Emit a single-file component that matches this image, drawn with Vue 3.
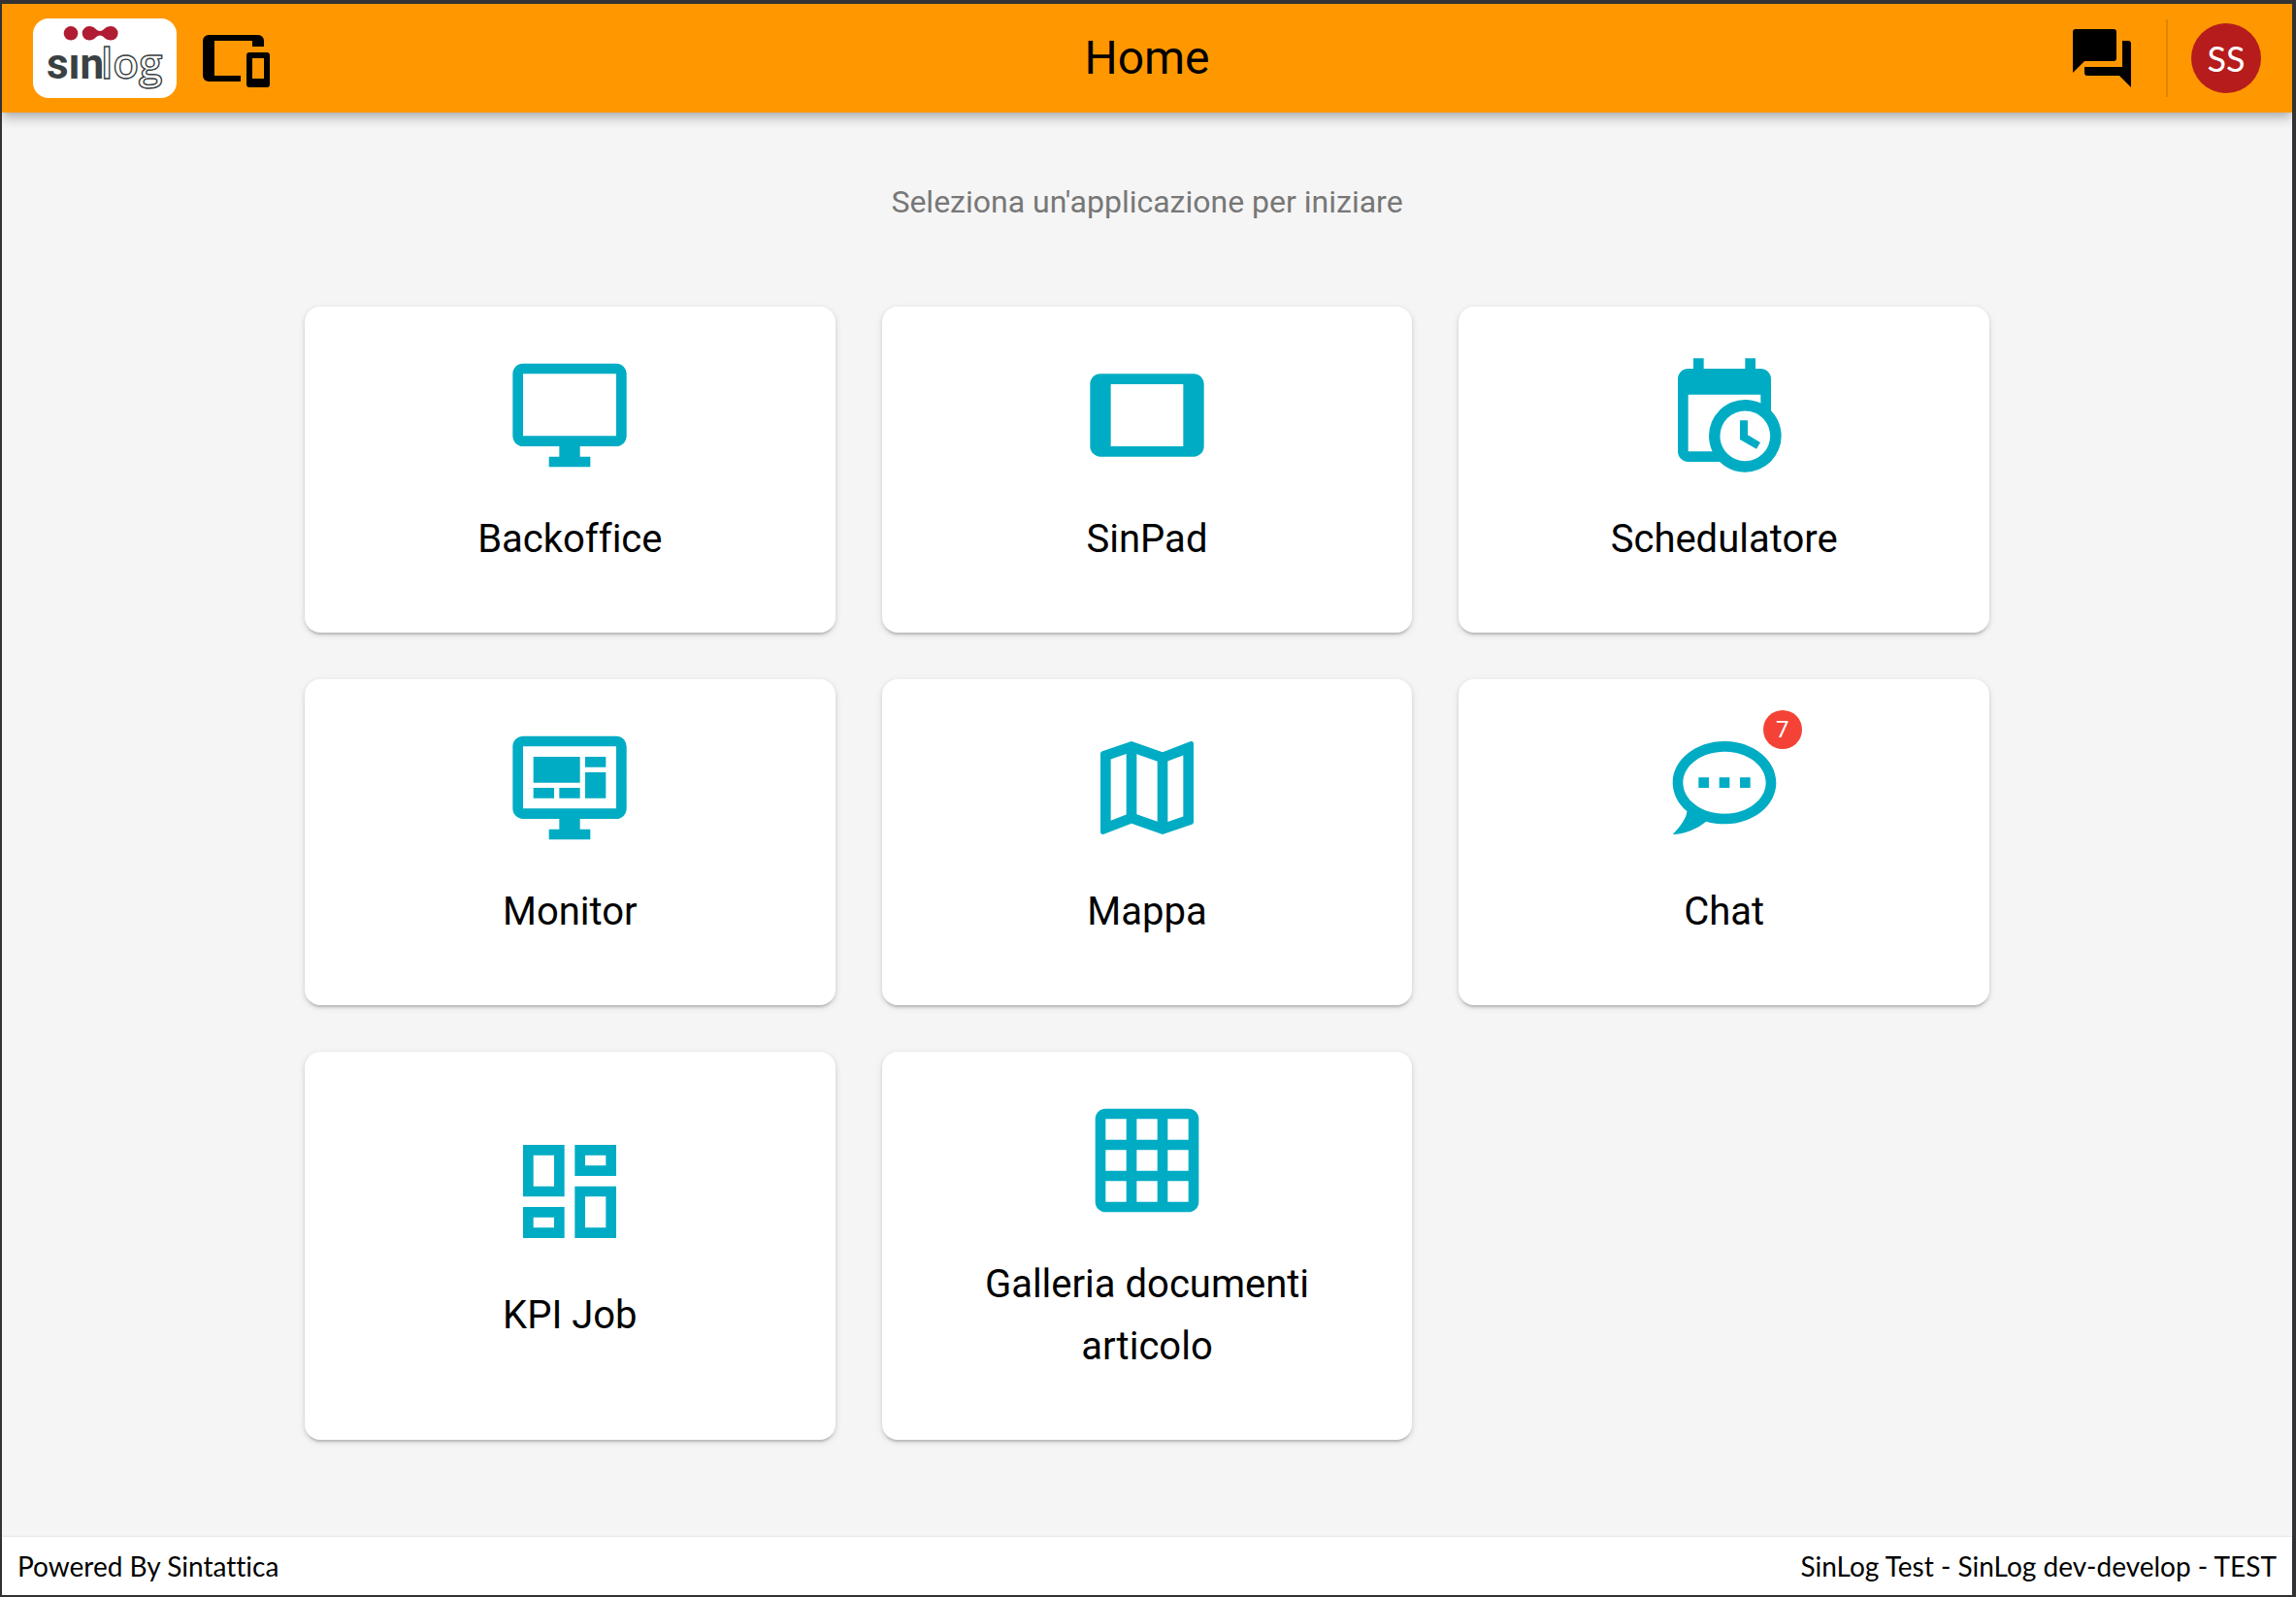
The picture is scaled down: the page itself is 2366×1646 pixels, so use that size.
<script setup>
import { ref } from 'vue';

const title = ref('Home');
const initials = ref('SS');

const apps = [
  {
    name: 'Backoffice',
    icon: 'M21,16H3V4H21M21,2H3C1.89,2 1,2.89 1,4V16A2,2 0 0,0 3,18H10V20H8V22H16V20H14V18H21A2,2 0 0,0 23,16V4C23,2.89 22.1,2 21,2Z',
  },
  {
    name: 'SinPad',
    icon: 'M19,18H5V6H19M21,4H3C1.89,4 1,4.89 1,6V18A2,2 0 0,0 3,20H21A2,2 0 0,0 23,18V6C23,4.89 22.1,4 21,4Z',
  },
  {
    name: 'Schedulatore',
    icon: 'M15,13H16.5V15.82L18.94,17.23L18.19,18.53L15,16.69V13M19,8H5V19H9.67C9.24,18.09 9,17.07 9,16A7,7 0 0,1 16,9C17.07,9 18.09,9.24 19,9.67V8M5,21C3.89,21 3,20.1 3,19V5C3,3.89 3.89,3 5,3H6V1H8V3H16V1H18V3H19A2,2 0 0,1 21,5V11.1C22.24,12.36 23,14.09 23,16A7,7 0 0,1 16,23C14.09,23 12.36,22.24 11.1,21H5M16,11.15A4.85,4.85 0 0,0 11.15,16C11.15,18.68 13.32,20.85 16,20.85A4.85,4.85 0 0,0 20.85,16C20.85,13.32 18.68,11.15 16,11.15Z',
  },
  {
    name: 'Monitor',
    icon: 'M21,16V4H3V16H21M21,2A2,2 0 0,1 23,4V16A2,2 0 0,1 21,18H14V20H16V22H8V20H10V18H3C1.89,18 1,17.1 1,16V4C1,2.89 1.89,2 3,2H21M5,6H14V11H5V6M15,6H19V8H15V6M19,9V14H15V9H19M5,12H9V14H5V12M10,12H14V14H10V12Z',
  },
  {
    name: 'Mappa',
    icon: 'M20.5,3L20.34,3.03L15,5.1L9,3L3.36,4.9C3.15,4.97 3,5.15 3,5.38V20.5A0.5,0.5 0 0,0 3.5,21L3.66,20.97L9,18.9L15,21L20.64,19.1C20.85,19.03 21,18.85 21,18.62V3.5A0.5,0.5 0 0,0 20.5,3M10,5.47L14,6.87V18.53L10,17.13V5.47M5,6.46L8,5.45V17.15L5,18.31V6.46M19,17.54L16,18.55V6.86L19,5.7V17.54Z',
  },
  {
    name: 'Chat',
    badge: 7,
    icon: 'M12 3C6.5 3 2 6.58 2 11C2.05 13.15 3.06 15.17 4.75 16.5C4.75 17.1 4.33 18.67 2 21C4.37 20.89 6.64 20 8.47 18.5C9.61 18.83 10.81 19 12 19C17.5 19 22 15.42 22 11S17.5 3 12 3M12 17C7.58 17 4 14.31 4 11S7.58 5 12 5 20 7.69 20 11 16.42 17 12 17M17 12V10H15V12H17M13 12V10H11V12H13M9 12V10H7V12H9Z',
  },
  {
    name: 'KPI Job',
    icon: 'M19,5V7H15V5H19M9,5V11H5V5H9M19,13V19H15V13H19M9,17V19H5V17H9M21,3H13V9H21V3M11,3H3V13H11V3M21,11H13V21H21V11M11,15H3V21H11V15Z',
  },
  {
    name: 'Galleria documenti articolo',
    icon: 'M4,2H20A2,2 0 0,1 22,4V20A2,2 0 0,1 20,22H4A2,2 0 0,1 2,20V4A2,2 0 0,1 4,2M4,4V8H8V4H4M10,4V8H14V4H10M16,4V8H20V4H16M4,10V14H8V10H4M10,10V14H14V10H10M16,10V14H20V10H16M4,16V20H8V16H4M10,16V20H14V16H10M16,16V20H20V16H16Z',
  },
];
</script>

<template>
  <div class="app">
    <header class="bar">
      <div class="bar-left">
        <a class="logo" href="#" aria-label="sinlog">
          <svg viewBox="0 0 148 82" width="148" height="82">
            <g fill="#b01c33">
              <circle cx="39" cy="15.300" r="7.300" />
              <path
                d="M58,8C64,8 65,13 69,13C73,13 74,8 80.300,8A7.300,7.300 0 0,1 80.300,22.600C74,22.600 73,17.600 69,17.600C65,17.600 64,22.600 58,22.600A7.300,7.300 0 0,1 58,8Z"
              />
            </g>
            <text class="logo-sin" x="14" y="62">sın</text>
            <text class="logo-log" x="70" y="62">log</text>
          </svg>
        </a>
        <button class="icon-btn" type="button" aria-label="Dispositivi">
          <svg viewBox="0 0 24 24">
            <path
              d="M3,4H20A2,2 0 0,1 22,6V8H18V6H5V18H14V20H3A2,2 0 0,1 1,18V6A2,2 0 0,1 3,4M17,10H23A1,1 0 0,1 24,11V21A1,1 0 0,1 23,22H17A1,1 0 0,1 16,21V11A1,1 0 0,1 17,10M18,12V19H22V12H18Z"
            />
          </svg>
        </button>
      </div>
      <h1 class="title">{{ title }}</h1>
      <div class="bar-right">
        <button class="icon-btn" type="button" aria-label="Messaggi">
          <svg viewBox="0 0 24 24">
            <path
              d="M17,12V3A1,1 0 0,0 16,2H3A1,1 0 0,0 2,3V17L6,13H16A1,1 0 0,0 17,12M21,6H19V15H6V17A1,1 0 0,0 7,18H18L22,22V7A1,1 0 0,0 21,6Z"
            />
          </svg>
        </button>
        <span class="divider"></span>
        <button class="avatar" type="button">{{ initials }}</button>
      </div>
    </header>

    <main class="content">
      <p class="hint">Seleziona un'applicazione per iniziare</p>
      <nav class="grid">
        <a v-for="app in apps" :key="app.name" class="card" href="#">
          <span class="card-icon">
            <svg viewBox="0 0 24 24">
              <path :d="app.icon" fill-rule="evenodd" />
            </svg>
            <span v-if="app.badge" class="badge">{{ app.badge }}</span>
          </span>
          <span class="card-name">{{ app.name }}</span>
        </a>
      </nav>
    </main>

    <footer class="footer">
      <span>Powered By Sintattica</span>
      <span>SinLog Test - SinLog dev-develop - TEST</span>
    </footer>
  </div>
</template>

<style>
body {
  background: #3a383b;
}
</style>

<style scoped>
.app {
  display: flex;
  flex-direction: column;
  box-sizing: border-box;
  min-height: 100vh;
  border: solid #333234;
  border-width: 4px 4px 2px 2px;
  background: #f5f5f5;
  font-family: Roboto, sans-serif;
  font-variant-ligatures: none;
  color: #000;
}

.bar {
  display: grid;
  grid-template-columns: 1fr auto 1fr;
  align-items: center;
  height: 112px;
  padding: 0 32px;
  background: #ff9800;
  box-shadow: 0 4px 8px -2px rgba(0, 0, 0, 0.16),
    0 8px 10px 0 rgba(0, 0, 0, 0.12), 0 2px 16px 0 rgba(0, 0, 0, 0.08);
  clip-path: inset(0 0 -32px 0);
}

.bar-left,
.bar-right {
  display: flex;
  align-items: center;
  gap: 24px;
}

.bar-right {
  justify-content: flex-end;
}

.logo {
  display: block;
  height: 82px;
  border-radius: 16px;
  background: #fff;
}

.logo svg {
  display: block;
}

.logo-sin {
  font-family: Roboto, sans-serif;
  font-size: 44px;
  font-weight: 700;
  fill: #3a4142;
}

.logo-log {
  font-family: 'Open Sans', sans-serif;
  font-size: 44px;
  font-weight: 600;
  fill: #fff;
  stroke: #3a4142;
  stroke-width: 1.4;
}

.icon-btn {
  width: 72px;
  height: 72px;
  padding: 0;
  border: none;
  background: none;
  cursor: pointer;
}

.icon-btn svg {
  display: block;
  width: 100%;
  height: 100%;
}

.title {
  margin: 0;
  font-size: 48px;
  font-weight: 400;
  line-height: 64px;
}

.divider {
  width: 2px;
  height: 80px;
  margin-left: 6px;
  background: rgba(0, 0, 0, 0.12);
}

.avatar {
  width: 72px;
  height: 72px;
  padding: 0;
  border: none;
  border-radius: 50%;
  background: #b71c1c;
  color: #fff;
  font-family: Lato, sans-serif;
  font-size: 36px;
  cursor: pointer;
}

.content {
  flex: 1;
  padding: 64px 32px;
}

.hint {
  margin: 0 0 80px;
  font-size: 32px;
  line-height: 56px;
  text-align: center;
  color: #777;
}

.grid {
  display: grid;
  grid-template-columns: repeat(3, 1fr);
  gap: 48px;
  max-width: 1736px;
  margin: 0 auto;
}

.card {
  display: flex;
  flex-direction: column;
  align-items: center;
  justify-content: center;
  gap: 32px;
  padding: 48px 48px 64px;
  border-radius: 16px;
  background: #fff;
  box-shadow: 0 4px 2px -2px rgba(0, 0, 0, 0.12),
    0 2px 4px 0 rgba(0, 0, 0, 0.12), 0 2px 8px 0 rgba(0, 0, 0, 0.08);
  color: inherit;
  text-decoration: none;
}

.card-icon {
  position: relative;
  width: 128px;
  height: 128px;
}

.card-icon svg {
  display: block;
  fill: #00acc4;
}

.badge {
  position: absolute;
  top: -16px;
  right: -16px;
  width: 40px;
  border-radius: 50%;
  background: #f44336;
  color: #fff;
  font-size: 24px;
  line-height: 40px;
  text-align: center;
}

.card-name {
  font-size: 40px;
  line-height: 64px;
  text-align: center;
}

.footer {
  display: flex;
  align-items: center;
  justify-content: space-between;
  height: 60px;
  padding: 0 16px;
  background: #fff;
  box-shadow: 0 0 2px rgba(0, 0, 0, 0.16);
  font-family: Lato, sans-serif;
  font-size: 28px;
}
</style>
